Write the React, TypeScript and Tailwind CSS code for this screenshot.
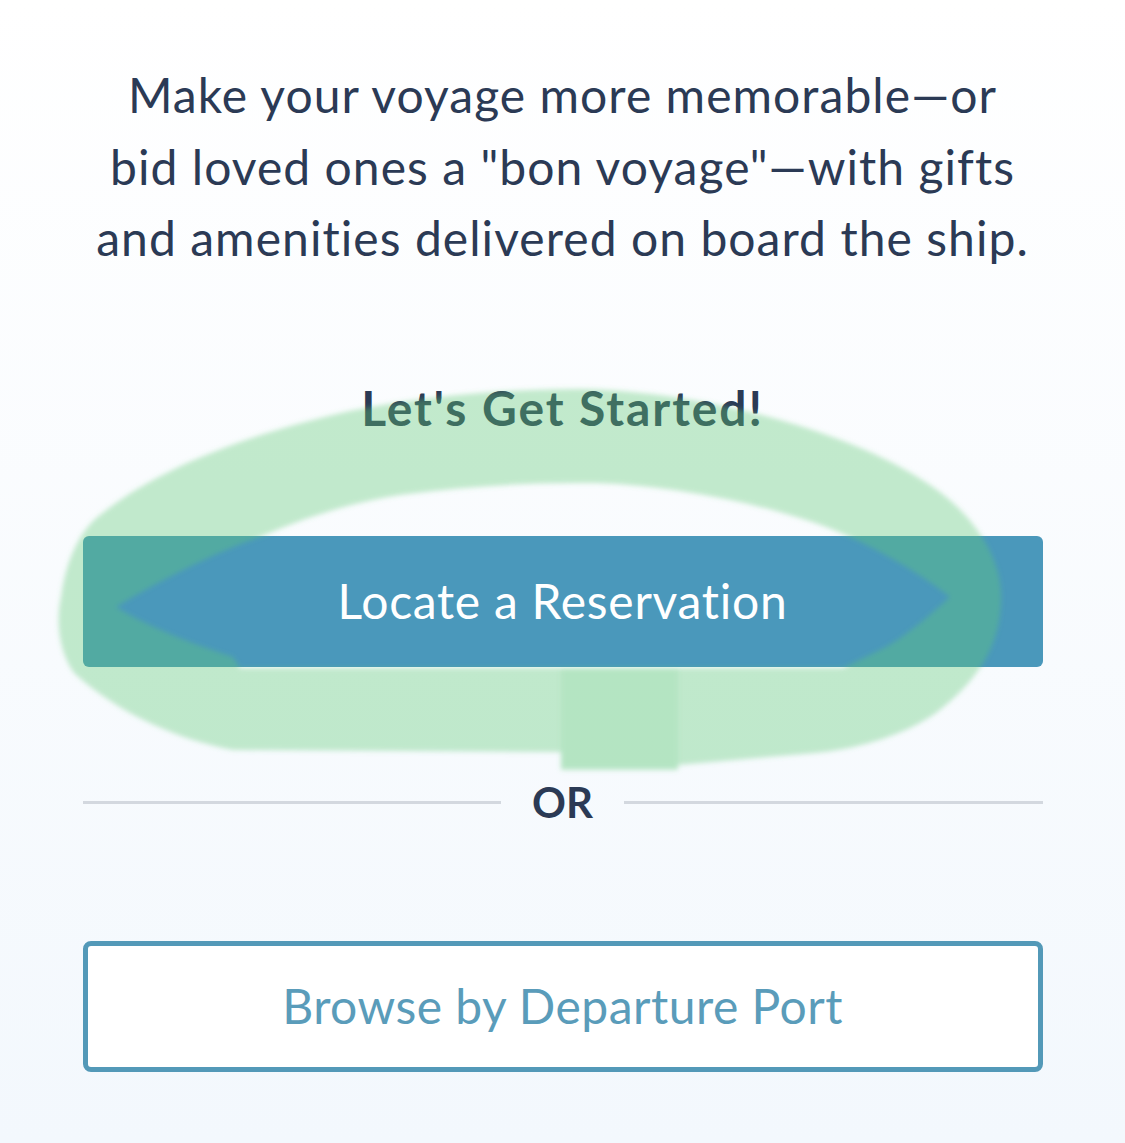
import React from "react";

function Highlight() {
  // green marker loop drawn over the page
  return (
    <svg
      className="pointer-events-none absolute left-0 top-0"
      width="1125"
      height="1143"
      viewBox="0 0 1125 1143"
    >
      <defs>
        <filter id="soft" x="-10%" y="-10%" width="120%" height="120%">
          <feGaussianBlur stdDeviation="2.5" />
        </filter>
      </defs>
      <g filter="url(#soft)" fill="rgb(96,201,120)">
        <path
          fillRule="evenodd"
          opacity="0.37"
          d="M 580 389 C 700 391, 850 430, 930 485 C 975 515, 1003 560, 1001 600 C 1000 640, 985 675, 936 713 C 900 738, 850 750, 815 753 L 678 765 L 678 770 L 561 770 L 561 752 L 233 750 C 180 740, 120 715, 74 673 C 58 650, 56 620, 61 597 C 66 560, 80 530, 100 515 C 150 475, 230 438, 350 411 C 420 397, 500 389, 580 389 Z
             M 580 483 C 660 482, 780 505, 850 537 C 900 560, 935 585, 950 597 C 925 620, 900 640, 884 648 L 843 668 L 240 668 L 233 657 C 180 640, 140 622, 116 607 C 160 580, 220 550, 260 537 C 300 520, 340 505, 400 495 C 460 487, 520 483, 580 483 Z"
        />
        <rect x="561" y="668" width="117" height="100" opacity="0.12" />
      </g>
    </svg>
  );
}

function App() {
  return (
    <div className="relative min-h-[1143px] overflow-hidden bg-gradient-to-b from-white to-[#f3f8fd] font-['Lato',sans-serif] [font-variant-ligatures:none]">
      <div className="mx-auto flex w-[960px] flex-col items-center pt-[59px]">
        <p className="text-center text-[48px] leading-[71.5px] tracking-[0.022em] text-[#2b3a55]">
          Make your voyage more memorable—or
          <br />
          bid loved ones a "bon voyage"—with gifts
          <br />
          and amenities delivered on board the ship.
        </p>

        <h2 className="mt-[104px] text-[48px] font-bold leading-[60px] tracking-[0.04em] text-[#2b3a55]">
          Let's Get Started!
        </h2>

        <button className="mt-[98px] h-[131px] w-full rounded-md bg-[#4a98bb] text-[48px] tracking-[0.015em] text-white">
          Locate a Reservation
        </button>

        <div className="mt-[111px] flex h-[50px] w-full items-center gap-[31px]">
          <div className="h-[3px] flex-1 bg-[#d3d8df]" />
          <span className="text-[42px] font-bold text-[#2b3a55]">OR</span>
          <div className="h-[3px] flex-1 bg-[#d3d8df]" />
        </div>

        <button className="mt-[113px] h-[131px] w-full rounded-lg border-[5px] border-[#5399b8] bg-white text-[48px] tracking-[0.01em] text-[#5a9cba]">
          Browse by Departure Port
        </button>
      </div>

      <Highlight />
    </div>
  );
}

export default App;
